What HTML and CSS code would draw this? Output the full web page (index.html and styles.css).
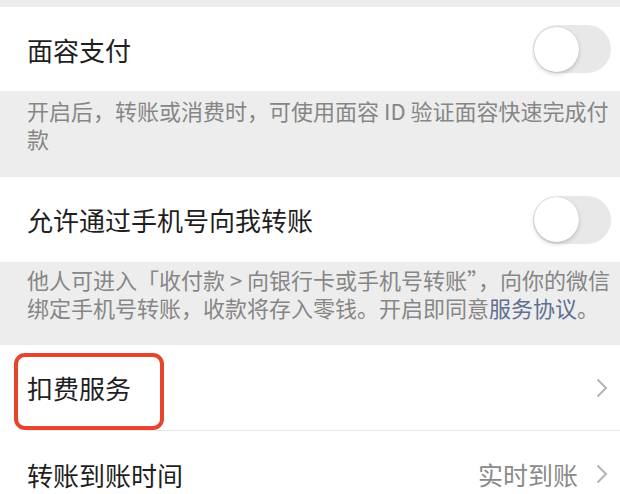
FILE: index.html
```html
<!DOCTYPE html>
<html lang="zh-CN">
<head>
<meta charset="utf-8">
<link rel="stylesheet" href="styles.css">
</head>
<body>
<div class="page">
  <div class="gap-top"></div>

  <div class="row row-1">
    <span class="title">面容支付</span>
    <span class="toggle"><span class="knob"></span></span>
  </div>
  <div class="desc desc-1">开启后，转账或消费时，可使用面容 ID 验证面容快速完成付<br>款</div>

  <div class="row row-2">
    <span class="title">允许通过手机号向我转账</span>
    <span class="toggle"><span class="knob"></span></span>
  </div>
  <div class="desc desc-2">他人可进入「收付款 &gt; 向银行卡或手机号转账”，向你的微信<br>绑定手机号转账，收款将存入零钱。开启即同意<span class="link">服务协议</span>。</div>

  <div class="row row-3 with-line">
    <span class="title">扣费服务</span>
    <span class="chev"><svg width="12" height="20" viewBox="0 0 12 20"><path d="M1.5 1.5 L10 10 L1.5 18.5" fill="none" stroke="#b4b4b4" stroke-width="2"/></svg></span>
    <span class="highlight"></span>
  </div>

  <div class="row row-4">
    <span class="title">转账到账时间</span>
    <span class="value">实时到账</span>
    <span class="chev"><svg width="12" height="20" viewBox="0 0 12 20"><path d="M1.5 1.5 L10 10 L1.5 18.5" fill="none" stroke="#b4b4b4" stroke-width="2"/></svg></span>
  </div>
</div>
</body>
</html>
```

FILE: styles.css
```css
html, body {
  margin: 0;
  padding: 0;
  background: #ffffff;
}
body {
  font-family: "Noto Sans CJK SC", "Noto Sans", sans-serif;
  width: 620px;
  height: 494px;
  overflow: hidden;
}
.page {
  display: flex;
  flex-direction: column;
}
.gap-top {
  height: 7px;
  background: #ededed;
}
.row {
  position: relative;
  display: flex;
  align-items: center;
  background: #ffffff;
  padding: 0 12px 0 27px;
  height: 84px;
  flex: none;
}
.row-2 { height: 85px; }
.row-3 { height: 85px; }
.row-4 { height: 86px; margin-top: 1px; }
.title {
  flex: 1;
  font-size: 26px;
  color: #1f1f1f;
}
.toggle {
  width: 78px;
  height: 48px;
  border-radius: 24px;
  background: #e8e8e8;
  display: flex;
  align-items: center;
  padding-left: 1px;
  box-sizing: border-box;
  margin-right: -3px;
}
.knob {
  width: 45px;
  height: 45px;
  border-radius: 50%;
  background: #ffffff;
  box-shadow: 0 2px 4px rgba(0,0,0,0.18), 0 0 1px rgba(0,0,0,0.15);
}
.desc {
  background: #ededed;
  color: #868686;
  font-size: 22px;
  line-height: 28px;
  padding: 5px 6px 0 27px;
  box-sizing: border-box;
  white-space: nowrap;
  flex: none;
}
.desc-1 { height: 86px; }
.desc-2 { height: 83px; padding-top: 3px; }
.link { color: #5f6f92; }
.with-line::after {
  content: "";
  position: absolute;
  left: 27px;
  right: 0;
  bottom: -1px;
  height: 1px;
  background: #e6e6e6;
}
.value {
  font-size: 25px;
  color: #8a8a8a;
  margin-right: 18px;
}
.chev {
  display: flex;
  align-items: center;
}
.highlight {
  position: absolute;
  left: 14px;
  top: 8px;
  width: 150px;
  height: 77px;
  box-sizing: border-box;
  border: 4px solid #e8432c;
  border-radius: 11px;
}
```
